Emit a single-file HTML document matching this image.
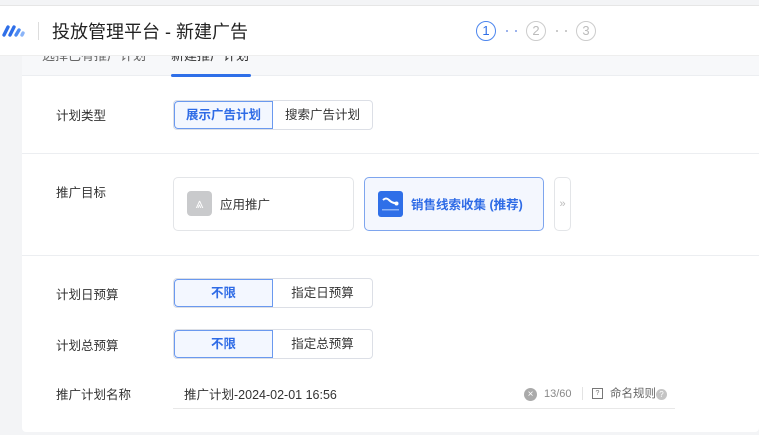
<!DOCTYPE html>
<html><head><meta charset="utf-8"><style>
*{margin:0;padding:0;box-sizing:border-box}
body{width:759px;height:435px;overflow:hidden;background:#f3f4f6;font-family:"Liberation Sans","Noto Sans CJK SC",sans-serif;position:relative;color:#333}
.a{position:absolute;line-height:1.2}
.lbl{font-size:12.5px;color:#333}
.grp{display:flex;height:30px;border:1px solid #dcdfe6;border-radius:4px;overflow:hidden;font-size:12.5px}
.grp div{flex:1;display:flex;align-items:center;justify-content:center;color:#333}
.grp .on{background:#f3f7ff;color:#2e6be6;font-weight:bold;box-shadow:inset 0 0 0 1px #6a99ef;border-radius:4px 0 0 4px}
.circ{width:20px;height:20px;border-radius:50%;border:1px solid #ccc;color:#bbb;font-size:13px;display:flex;align-items:center;justify-content:center}
.dot{width:2px;height:2px;border-radius:50%;background:#bbb}
</style></head><body>
<div class="a" style="left:22px;top:56px;width:737px;height:376px;background:#fff;border-radius:4px"></div>
<div class="a" style="left:22px;top:56px;width:737px;height:20px;background:#f7f8fa;border-bottom:1px solid #eceef1"></div>
<div class="a" style="left:42px;top:48px;font-size:13px;color:#666">选择已有推广计划</div>
<div class="a" style="left:171px;top:48px;font-size:13px;color:#333">新建推广计划</div>
<div class="a" style="left:171px;top:74px;width:80px;height:3px;background:#2f6fe8;border-radius:2px"></div>
<div class="a" style="left:0;top:5px;width:759px;height:51px;background:#fff;border-top:1px solid #e6e6e6;border-bottom:1px solid #eee"></div>
<svg class="a" style="left:2px;top:23px" width="24" height="16" viewBox="0 0 24 16">
<g stroke-linecap="round" stroke-width="3.4"><line x1="2" y1="12" x2="6" y2="4" stroke="#2f6fe8"/><line x1="8" y1="12" x2="12" y2="4" stroke="#2f6fe8"/><line x1="14" y1="12" x2="17" y2="7" stroke="#4c8af2"/><line x1="20" y1="12" x2="21" y2="10" stroke="#8ab4f8"/></g></svg>
<div class="a" style="left:38px;top:22px;width:1px;height:18px;background:#ddd"></div>
<div class="a" style="left:52px;top:22px;font-size:18px;color:#222">投放管理平台 - 新建广告</div>
<div class="a circ" style="left:476px;top:21px;border-color:#4d86ee;color:#2f6fe8">1</div>
<div class="a dot" style="left:506px;top:30px;background:#7c9be6"></div><div class="a dot" style="left:515px;top:30px;background:#7c9be6"></div>
<div class="a circ" style="left:526px;top:21px">2</div>
<div class="a dot" style="left:556px;top:30px"></div><div class="a dot" style="left:565px;top:30px"></div>
<div class="a circ" style="left:576px;top:21px">3</div>

<div class="a lbl" style="left:56px;top:109px">计划类型</div>
<div class="a grp" style="left:173px;top:100px;width:200px"><div class="on">展示广告计划</div><div>搜索广告计划</div></div>
<div class="a" style="left:22px;top:153px;width:737px;height:1px;background:#eceef1"></div>
<div class="a lbl" style="left:56px;top:186px">推广目标</div>
<div class="a" style="left:173px;top:177px;width:181px;height:54px;border:1px solid #e3e5e8;border-radius:5px"></div>
<div class="a" style="left:187px;top:191px;width:25px;height:25px;background:#c9cacc;border-radius:4px;color:#fff;font-size:14px;text-align:center;line-height:25px">⩓</div>
<div class="a" style="left:220px;top:198px;font-size:12.5px">应用推广</div>
<div class="a" style="left:364px;top:177px;width:180px;height:54px;border:1px solid #7ea5ee;border-radius:5px;background:#f4f7fe"></div>
<svg class="a" style="left:378px;top:191px" width="25" height="26" viewBox="0 0 25 26"><rect width="25" height="26" rx="3" fill="#2f6fe8"/><path d="M5 9 Q8 6 11 9 T17 12" stroke="#fff" stroke-width="2" fill="none"/><circle cx="18.5" cy="12.5" r="2" fill="#fff"/><rect x="4" y="18" width="17" height="1.5" fill="#8fb3f5"/></svg>
<div class="a" style="left:411px;top:198px;font-size:12.5px;color:#2e6be6;font-weight:bold">销售线索收集 (推荐)</div>
<div class="a" style="left:554px;top:177px;width:17px;height:54px;border:1px solid #e3e5e8;border-radius:5px;color:#bbb;font-size:11px;text-align:center;line-height:52px">»</div>
<div class="a" style="left:22px;top:255px;width:737px;height:1px;background:#eceef1"></div>

<div class="a lbl" style="left:56px;top:288px">计划日预算</div>
<div class="a grp" style="left:173px;top:278px;width:200px"><div class="on">不限</div><div>指定日预算</div></div>
<div class="a lbl" style="left:56px;top:339px">计划总预算</div>
<div class="a grp" style="left:173px;top:329px;width:200px"><div class="on">不限</div><div>指定总预算</div></div>
<div class="a lbl" style="left:56px;top:388px">推广计划名称</div>
<div class="a" style="left:184px;top:388px;font-size:12.5px;color:#333">推广计划-2024-02-01 16:56</div>
<div class="a" style="left:524px;top:388px;width:13px;height:13px;border-radius:50%;background:#aaa;color:#fff;font-size:10px;text-align:center;line-height:13px">×</div>
<div class="a" style="left:544px;top:388px;font-size:11px;color:#888">13/60</div>
<div class="a" style="left:582px;top:387px;width:1px;height:13px;background:#e3e3e3"></div>
<div class="a" style="left:592px;top:388px;width:11px;height:11px;border:1px solid #777;font-size:7px;line-height:9px;text-align:center;color:#777">?</div>
<div class="a" style="left:610px;top:388px;font-size:11.5px;color:#666">命名规则</div>
<div class="a" style="left:656px;top:389px;width:11px;height:11px;border-radius:50%;background:#c4c4c4;color:#fff;font-size:8px;text-align:center;line-height:11px">?</div>
<div class="a" style="left:173px;top:408px;width:502px;height:1px;background:#e8e8e8"></div>
</body></html>
